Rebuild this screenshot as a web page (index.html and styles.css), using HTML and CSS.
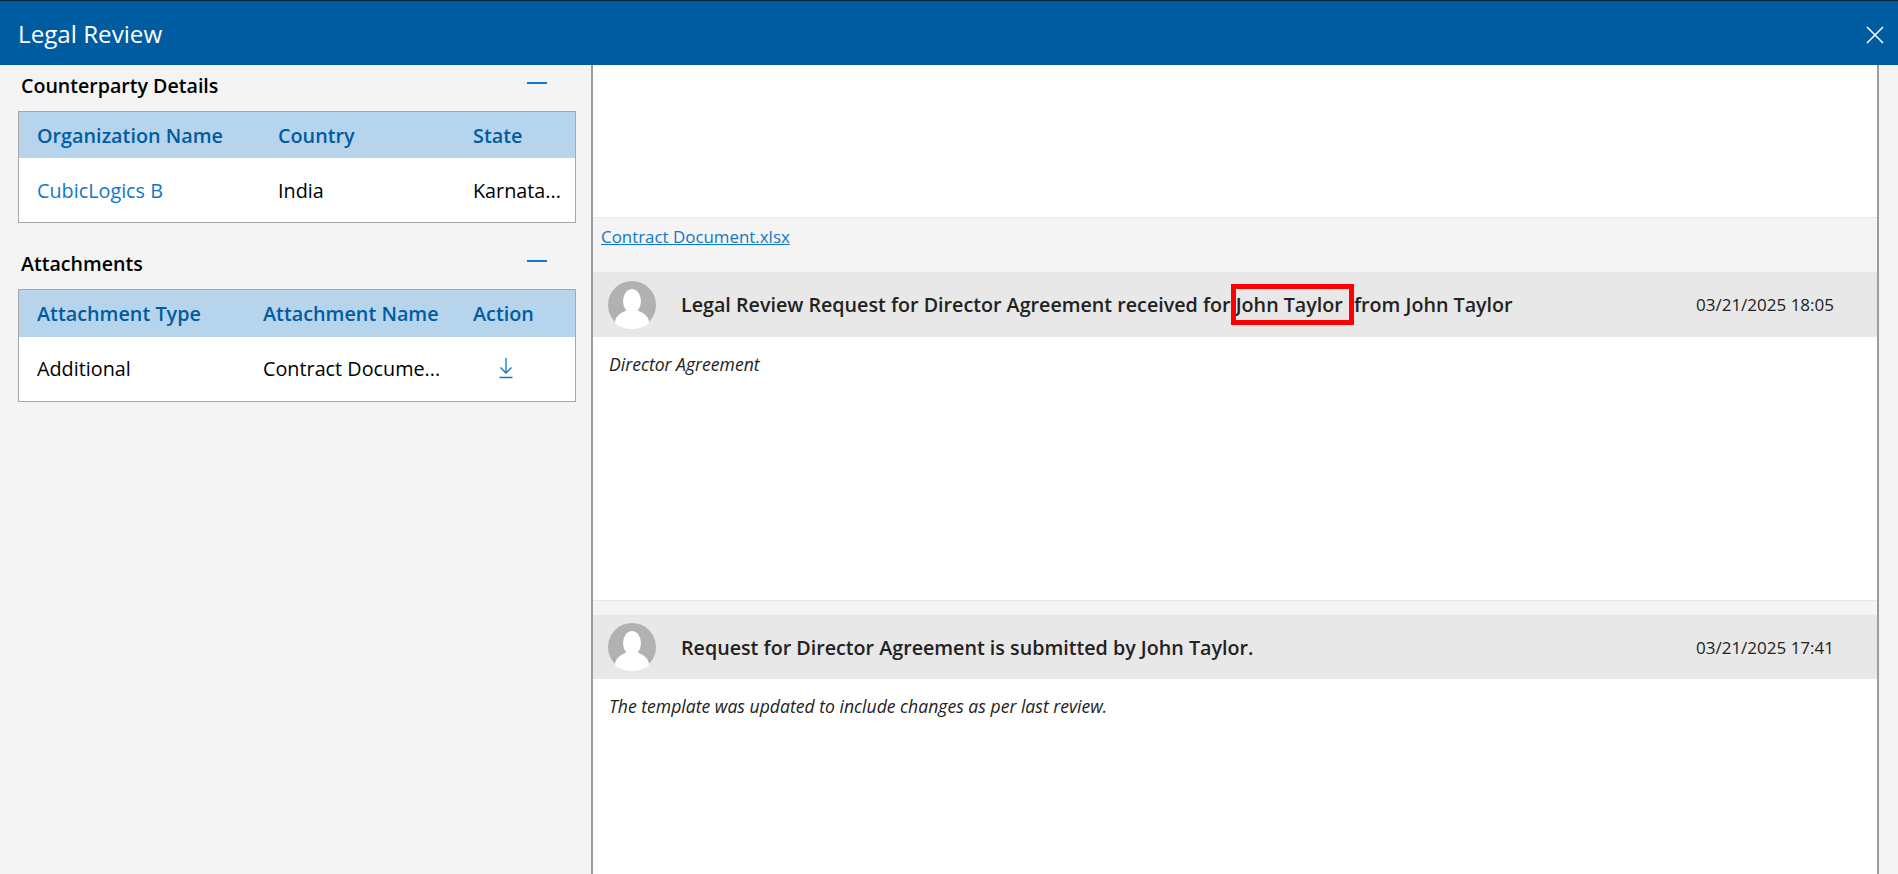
FILE: index.html
```html
<!DOCTYPE html>
<html lang="en">
<head>
  <meta charset="UTF-8" />
  <title>Legal Review</title>
  <link rel="stylesheet" href="styles.css">
</head>
<body>
  <header class="topbar">
    <span class="topbar-title">Legal Review</span>
    <svg class="close-icon" width="18" height="18" viewBox="0 0 18 18">
      <path d="M1 1L17 17M17 1L1 17" stroke="#fff" stroke-width="1.5" fill="none" />
    </svg>
  </header>

  <div class="main">
    <aside class="side">
      <section class="side-section">
        <div class="section-head">
          <h2>Counterparty Details</h2>
          <span class="collapse"></span>
        </div>
        <div class="grid-table">
          <div class="grid-row grid-head org-cols">
            <span>Organization Name</span>
            <span>Country</span>
            <span>State</span>
          </div>
          <div class="grid-row grid-body org-cols">
            <a class="cell-link">CubicLogics B</a>
            <span>India</span>
            <span>Karnata...</span>
          </div>
        </div>
      </section>

      <section class="side-section">
        <div class="section-head">
          <h2>Attachments</h2>
          <span class="collapse"></span>
        </div>
        <div class="grid-table">
          <div class="grid-row grid-head att-cols">
            <span>Attachment Type</span>
            <span>Attachment Name</span>
            <span>Action</span>
          </div>
          <div class="grid-row grid-body att-cols">
            <span>Additional</span>
            <span>Contract Docume...</span>
            <svg class="download-icon" width="16" height="22" viewBox="0 0 16 22">
              <path d="M8 1V16M2.5 10.5L8 16L13.5 10.5M1.5 20.5H14.5" stroke="#0f78c8" stroke-width="1.3" fill="none" />
            </svg>
          </div>
        </div>
      </section>
    </aside>

    <main class="feed">
      <div class="blank-top"></div>
      <div class="file-row"><a class="file-link">Contract Document.xlsx</a></div>

      <div class="entry-head">
        <svg class="avatar" width="48" height="48" viewBox="0 0 48 48">
          <ellipse cx="24" cy="24" rx="24" ry="24" fill="#b1b1b1" />
          <ellipse cx="24" cy="20" rx="9" ry="12" fill="#fff" />
          <path d="M7 42C7 35 13 32 19 29H29C35 32 41 35 41 42C37 46 31 48 24 48C17 48 11 46 7 42Z" fill="#fff" />
        </svg>
        <div class="entry-title">Legal Review Request for Director Agreement received for <span class="marked">John Taylor</span> from John Taylor</div>
        <div class="entry-date">03/21/2025 18:05</div>
      </div>
      <div class="entry-body tall">Director Agreement</div>

      <div class="spacer"></div>

      <div class="entry-head second">
        <svg class="avatar" width="48" height="48" viewBox="0 0 48 48">
          <ellipse cx="24" cy="24" rx="24" ry="24" fill="#b1b1b1" />
          <ellipse cx="24" cy="20" rx="9" ry="12" fill="#fff" />
          <path d="M7 42C7 35 13 32 19 29H29C35 32 41 35 41 42C37 46 31 48 24 48C17 48 11 46 7 42Z" fill="#fff" />
        </svg>
        <div class="entry-title">Request for Director Agreement is submitted by John Taylor.</div>
        <div class="entry-date">03/21/2025 17:41</div>
      </div>
      <div class="entry-body">The template was updated to include changes as per last review.</div>
    </main>

    <div class="gutter"></div>
  </div>
</body>
</html>
```

FILE: styles.css
```css
html, body {
  height: 100%;
}

body {
  margin: 0;
  font-family: 'Open Sans', 'Noto Sans', sans-serif;
  background-color: #f4f4f4;
  color: #000;
  display: flex;
  flex-direction: column;
  overflow: hidden;
}

.topbar {
  height: 64px;
  flex: none;
  background: #005ca1;
  border-top: 1px solid #0a2338;
  display: flex;
  align-items: center;
  justify-content: space-between;
  padding: 0 14px 0 18px;
  color: #fff;
}

.topbar-title {
  font-size: 24.2px;
}

.close-icon {
  margin-top: 3px;
}

.main {
  flex: 1;
  display: flex;
  min-height: 0;
}

.side {
  width: 591px;
  flex: none;
  border-right: 2px solid #9c9c9c;
  padding-top: 3px;
}

.side-section {
  margin: 0 15px 0 18px;
  padding-bottom: 23px;
}

.section-head {
  display: flex;
  justify-content: space-between;
  align-items: center;
  height: 43px;
  padding: 0 29px 8px 3px;
  box-sizing: border-box;
}

.section-head h2 {
  margin: 0;
  font-size: 19.6px;
  font-weight: 600;
}

.collapse {
  width: 20px;
  height: 2px;
  background: #0f78c8;
  margin-bottom: 6px;
}

.grid-table {
  width: 556px;
  border: 1px solid #aaa6a8;
  background: #fff;
}

.grid-row {
  display: grid;
  align-items: center;
  padding-left: 18px;
  font-size: 19.8px;
  box-sizing: border-box;
}

.org-cols {
  grid-template-columns: 241px 195px 1fr;
}

.att-cols {
  grid-template-columns: 226px 210px 1fr;
}

.grid-head {
  height: 46px;
  background: #b7d4ed;
  color: #005ca1;
  font-weight: 600;
}

.grid-head.att-cols {
  height: 47px;
}

.grid-body {
  height: 64px;
}

.grid-body.att-cols {
  padding-bottom: 2px;
}

.cell-link {
  color: #0f78c8;
}

.download-icon {
  margin-left: 25px;
}

.feed {
  width: 1284px;
  flex: none;
  background: #fff;
  display: flex;
  flex-direction: column;
}

.blank-top {
  height: 152px;
  flex: none;
  border-bottom: 1px solid #e8e8e8;
}

.file-row {
  height: 54px;
  flex: none;
  background: #f4f4f4;
  padding: 7px 8px 0;
  box-sizing: border-box;
  font-size: 16.9px;
}

.file-link {
  color: #0f78c8;
  text-decoration: underline;
}

.entry-head {
  height: 65px;
  flex: none;
  background: #e8e8e8;
  display: flex;
  align-items: center;
  padding-left: 15px;
  box-sizing: border-box;
  color: #222;
}

.avatar {
  flex: none;
}

.entry-title {
  margin-left: 25px;
  font-size: 19.7px;
  font-weight: 600;
  flex: 1;
  white-space: nowrap;
}

.marked {
  display: inline-block;
  outline: 5px solid #ff0000;
  padding: 2px 6px 2px 0;
}

.entry-date {
  font-size: 17px;
  margin-right: 43px;
  white-space: nowrap;
}

.entry-body {
  padding: 15px 16px 0;
  font-size: 17.6px;
  font-style: italic;
  color: #222;
}

.tall {
  height: 248px;
  flex: none;
}

.spacer {
  height: 15px;
  flex: none;
  background: #f4f4f4;
  border-top: 1px solid #e8e8e8;
  box-sizing: border-box;
}

.second {
  height: 64px;
}

.gutter {
  flex: 1;
  border-left: 2px solid #9c9c9c;
}
```
